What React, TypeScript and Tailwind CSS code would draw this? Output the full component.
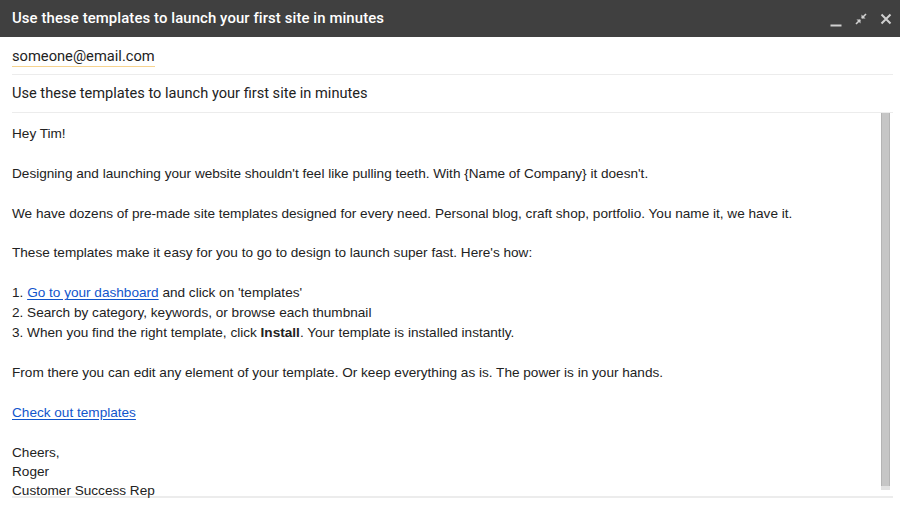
import { FC } from 'react';

const TitleIcons: FC = () => (
  <div className="flex items-center gap-[13px] text-[#d0d0d0]">
    <svg width="12" height="12" viewBox="0 0 12 12" className="mt-[6px]">
      <rect x="0.5" y="8.5" width="11" height="2" fill="currentColor" />
    </svg>
    <svg width="12" height="12" viewBox="0 0 12 12">
      <path d="M7 5 L11 1" stroke="currentColor" strokeWidth="1.6" />
      <path d="M6.5 1.5 V5.5 H10.5 Z" fill="currentColor" />
      <path d="M5 7 L1 11" stroke="currentColor" strokeWidth="1.6" />
      <path d="M5.5 10.5 V6.5 H1.5 Z" fill="currentColor" />
    </svg>
    <svg width="12" height="12" viewBox="0 0 12 12">
      <path d="M1.5 1.5 L10.5 10.5 M10.5 1.5 L1.5 10.5" stroke="currentColor" strokeWidth="2" />
    </svg>
  </div>
);

const Link: FC<{ children: string }> = ({ children }) => (
  <a href="#" className="text-[#1155cc] underline underline-offset-[2px]">
    {children}
  </a>
);

export default function App() {
  return (
    <div className="w-[900px] h-[505px] bg-white overflow-hidden flex flex-col">
      <div className="h-[37px] bg-[#404040] flex items-center justify-between pl-3 pr-[8px] shrink-0">
        <span className="text-white text-[14.9px] font-medium font-['Roboto',sans-serif] tracking-[0.1px] -mt-[1px]">
          Use these templates to launch your first site in minutes
        </span>
        <TitleIcons />
      </div>

      <div className="ml-3 mr-[7px] h-[38px] border-b border-[#ececec] flex items-center font-['Roboto',sans-serif] text-[14.7px] text-[#222] shrink-0">
        <span className="border-b border-[#f6d38f] leading-[19px] mt-[2px]">someone@email.com</span>
      </div>

      <div className="ml-3 mr-[7px] h-[38px] border-b border-[#ececec] flex items-center font-['Roboto',sans-serif] text-[14.6px] text-[#222] shrink-0">
        Use these templates to launch your first site in minutes
      </div>

      <div className="ml-3 mr-[7px] h-[385px] border-b-2 border-[#ececec] flex shrink-0">
        <div className="flex-1 pt-[11px] font-['Liberation_Sans',Arial,sans-serif] text-[13.6px] leading-[19.9px] text-[#222]">
          <p>Hey Tim!</p>
          <br />
          <p>
            Designing and launching your website shouldn't feel like pulling teeth. With {'{Name of Company}'} it
            doesn't.
          </p>
          <br />
          <p>
            We have dozens of pre-made site templates designed for every need. Personal blog, craft shop, portfolio.
            You name it, we have it.
          </p>
          <br />
          <p>These templates make it easy for you to go to design to launch super fast. Here's how:</p>
          <br />
          <p>
            1. <Link>Go to your dashboard</Link> and click on 'templates'
          </p>
          <p>2. Search by category, keywords, or browse each thumbnail</p>
          <p>
            3. When you find the right template, click <b>Install</b>. Your template is installed instantly.
          </p>
          <br />
          <p>From there you can edit any element of your template. Or keep everything as is. The power is in your hands.</p>
          <br />
          <p>
            <Link>Check out templates</Link>
          </p>
          <br />
          <p>Cheers,</p>
          <p>Roger</p>
          <p className="leading-[17px]">Customer Success Rep</p>
        </div>
        <div className="w-[9px] mr-[3px] flex flex-col">
          <div className="h-[373px] bg-[#c6c6c6] border-x border-[#b4b4b4]" />
          <div className="h-[4px] bg-[#e2e2e2]" />
        </div>
      </div>
    </div>
  );
}
